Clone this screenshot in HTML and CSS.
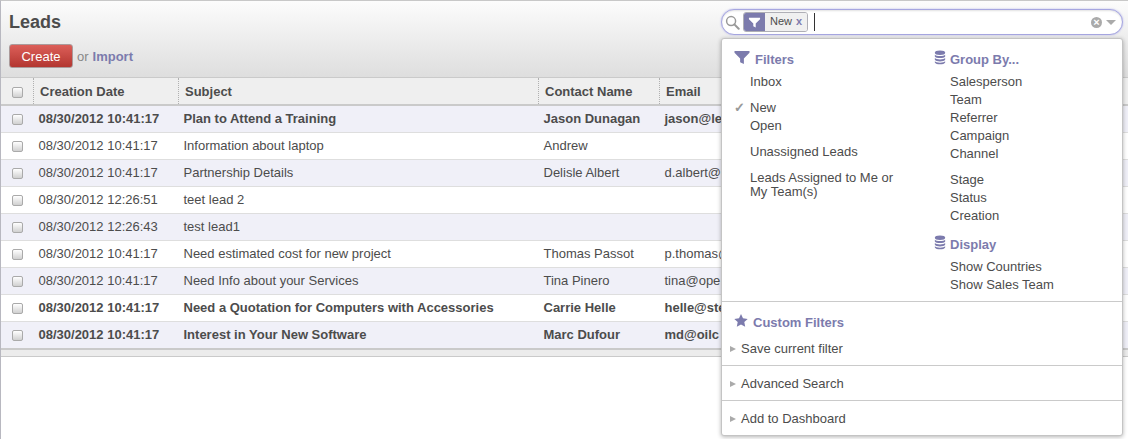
FILE: index.html
```html
<!DOCTYPE html>
<html lang="en">
<head>
    <meta charset="UTF-8">
    <title>Leads</title>
    <link rel="stylesheet" href="styles.css">
</head>
<body>
<div class="app">
    <div class="header">
        <div class="header-left">
            <h2 class="title">Leads</h2>
            <div class="actions">
                <button class="create">Create</button>
                <span class="or">or</span>
                <a class="import">Import</a>
            </div>
        </div>
        <div class="search">
            <svg class="search-icon" viewBox="0 0 16 16"><circle cx="6.5" cy="6.5" r="4.8" fill="none" stroke="#999" stroke-width="1.6"/><path d="M10 10l4.6 4.6" stroke="#999" stroke-width="2.2" stroke-linecap="round"/></svg>
            <div class="facet">
                <span class="facet-cat"><svg class="funnel-white" viewBox="0 0 14 14"><path d="M1 2h12v1.5L8.3 8v4.5l-2.6-1.4V8L1 3.5z" fill="#fff"/></svg></span>
                <span class="facet-val">New <b>x</b></span>
            </div>
            <span class="caret"></span>
            <span class="clear">×</span>
            <span class="drop-arrow"></span>
        </div>
    </div>

    <table class="list">
        <thead>
        <tr>
            <th class="col-check"><span class="check"></span></th>
            <th class="col-date">Creation Date</th>
            <th class="col-subject">Subject</th>
            <th class="col-contact">Contact Name</th>
            <th>Email</th>
        </tr>
        </thead>
        <tbody>
        <tr class="unread"><td><span class="check"></span></td><td>08/30/2012 10:41:17</td><td>Plan to Attend a Training</td><td>Jason Dunagan</td><td>jason@le</td></tr>
        <tr><td><span class="check"></span></td><td>08/30/2012 10:41:17</td><td>Information about laptop</td><td>Andrew</td><td></td></tr>
        <tr><td><span class="check"></span></td><td>08/30/2012 10:41:17</td><td>Partnership Details</td><td>Delisle Albert</td><td>d.albert@</td></tr>
        <tr><td><span class="check"></span></td><td>08/30/2012 12:26:51</td><td>teet lead 2</td><td></td><td></td></tr>
        <tr><td><span class="check"></span></td><td>08/30/2012 12:26:43</td><td>test lead1</td><td></td><td></td></tr>
        <tr><td><span class="check"></span></td><td>08/30/2012 10:41:17</td><td>Need estimated cost for new project</td><td>Thomas Passot</td><td>p.thomas@</td></tr>
        <tr><td><span class="check"></span></td><td>08/30/2012 10:41:17</td><td>Need Info about your Services</td><td>Tina Pinero</td><td>tina@ope</td></tr>
        <tr class="unread"><td><span class="check"></span></td><td>08/30/2012 10:41:17</td><td>Need a Quotation for Computers with Accessories</td><td>Carrie Helle</td><td>helle@ste</td></tr>
        <tr class="unread"><td><span class="check"></span></td><td>08/30/2012 10:41:17</td><td>Interest in Your New Software</td><td>Marc Dufour</td><td>md@oilc</td></tr>
        </tbody>
    </table>
    <div class="list-foot"></div>

    <div class="drawer">
        <div class="drawer-cols">
            <div class="drawer-col">
                <h3><svg class="ico" viewBox="0 0 16 16"><path d="M0 1h16v2l-6 6v6l-4-2V9L0 3z"/></svg>Filters</h3>
                <ul>
                    <li>Inbox</li>
                </ul>
                <ul>
                    <li class="on">New</li>
                    <li>Open</li>
                </ul>
                <ul>
                    <li>Unassigned Leads</li>
                </ul>
                <ul>
                    <li class="wrap">Leads Assigned to Me or<br>My Team(s)</li>
                </ul>
            </div>
            <div class="drawer-col">
                <h3><svg class="ico ico-db" viewBox="0 0 12 16"><ellipse cx="6" cy="3" rx="5.5" ry="2.4"/><path d="M.5 5c1 2 10 2 11 0v2c-1 2.2-10 2.2-11 0zM.5 8.5c1 2 10 2 11 0v2c-1 2.2-10 2.2-11 0zM.5 12c1 2 10 2 11 0v1.2c-1 2.8-10 2.8-11 0z"/></svg>Group By...</h3>
                <ul>
                    <li>Salesperson</li>
                    <li>Team</li>
                    <li>Referrer</li>
                    <li>Campaign</li>
                    <li>Channel</li>
                </ul>
                <ul>
                    <li>Stage</li>
                    <li>Status</li>
                    <li>Creation</li>
                </ul>
                <h3 class="display"><svg class="ico ico-db" viewBox="0 0 12 16"><ellipse cx="6" cy="3" rx="5.5" ry="2.4"/><path d="M.5 5c1 2 10 2 11 0v2c-1 2.2-10 2.2-11 0zM.5 8.5c1 2 10 2 11 0v2c-1 2.2-10 2.2-11 0zM.5 12c1 2 10 2 11 0v1.2c-1 2.8-10 2.8-11 0z"/></svg>Display</h3>
                <ul>
                    <li>Show Countries</li>
                    <li>Show Sales Team</li>
                </ul>
            </div>
        </div>
        <div class="drawer-sec custom">
            <h3><svg class="ico ico-star" viewBox="0 0 14 14"><path d="M7 .5l2 4.3 4.7.6-3.4 3.2.9 4.7L7 11l-4.2 2.3.9-4.7L.3 5.4 5 4.8z"/></svg>Custom Filters</h3>
            <div class="fold">Save current filter</div>
        </div>
        <div class="drawer-sec"><div class="fold">Advanced Search</div></div>
        <div class="drawer-sec"><div class="fold">Add to Dashboard</div></div>
    </div>
</div>
</body>
</html>
```

FILE: styles.css
```css
html, body {
    margin: 0;
    padding: 0;
    background: #fff;
}
body {
    font-family: "Liberation Sans", Arial, sans-serif;
    font-size: 13px;
    color: #4c4c4c;
}
.app {
    position: relative;
    height: 439px;
    overflow: hidden;
    box-sizing: border-box;
    border-left: 1px solid #b8b8c0;
    border-top: 1px solid #c8c8c8;
}
.header {
    display: flex;
    justify-content: space-between;
    height: 76px;
    box-sizing: border-box;
    padding: 8px 5px 0 8px;
    background: linear-gradient(#fcfcfc, #dedede);
}
.title {
    margin: 0;
    font-size: 18px;
    line-height: 26px;
    color: #4c4c4c;
}
.actions {
    display: flex;
    align-items: center;
    margin-top: 9px;
}
.create {
    width: 64px;
    height: 24px;
    padding: 0;
    border: 1px solid #ab9a9a;
    border-radius: 3px;
    background: linear-gradient(#dc5f59, #b33630);
    color: #fff;
    font: 13px "Liberation Sans", Arial, sans-serif;
}
.or {
    margin-left: 4px;
    color: #888;
}
.import {
    margin-left: 4px;
    font-weight: bold;
    color: #7c7bad;
}
.search {
    display: flex;
    align-items: center;
    width: 402px;
    height: 26px;
    box-sizing: border-box;
    padding: 0 6px 0 3px;
    border: 1px solid #a6a6e0;
    border-radius: 13px;
    background: #fff;
    box-shadow: inset 0 1px 2px rgba(0, 0, 0, 0.12), 0 0 2px #b4b4e8;
}
.search-icon {
    width: 15px;
    height: 15px;
}
.facet {
    display: flex;
    height: 20px;
    margin-left: 3px;
    box-sizing: border-box;
    border: 1px solid #afafb6;
    border-radius: 3px;
    overflow: hidden;
    font-size: 11px;
}
.facet-cat {
    display: flex;
    align-items: center;
    justify-content: center;
    width: 21px;
    background: #7c7bad;
}
.funnel-white {
    width: 13px;
    height: 13px;
}
.facet-val {
    padding: 0 5px;
    line-height: 16px;
    background: #f0f0f0;
    color: #4c4c4c;
}
.facet-val b {
    margin-left: 1px;
    font-weight: bold;
    color: #7c7bad;
}
.caret {
    width: 1px;
    height: 18px;
    margin-left: 6px;
    background: #333;
    flex: none;
}
.clear {
    display: block;
    width: 11px;
    height: 11px;
    margin-left: auto;
    border-radius: 50%;
    background: #aaa;
    color: #fff;
    font-size: 11px;
    font-weight: bold;
    line-height: 11px;
    text-align: center;
}
.drop-arrow {
    width: 0;
    height: 0;
    margin-left: 4px;
    border: 5px solid transparent;
    border-top: 5px solid #aaa;
    border-bottom: 0;
}
.list {
    width: 100%;
    table-layout: fixed;
    border-collapse: collapse;
}
.list th {
    height: 26px;
    padding: 0 0 0 6px;
    text-align: left;
    font-weight: bold;
    color: #4c4c4c;
    background: #efefef;
    border-top: 1px solid #cacaca;
    border-bottom: 2px solid #cacaca;
    border-left: 1px dotted #b0b0b0;
}
.list th:first-child, .list td:first-child {
    border-left: 0;
    padding: 0 0 2px;
    text-align: center;
}
.col-check { width: 32px; }
.col-date { width: 138px; }
.col-subject { width: 353px; }
.col-contact { width: 114px; }
.list th:first-child {
    padding: 0;
}
.list td {
    height: 24px;
    padding: 0 0 2px 5px;
    border-bottom: 1px solid #dedede;
    white-space: nowrap;
    overflow: hidden;
}
.list tbody tr:nth-child(odd) {
    background: #f0f0f8;
}
.list tbody tr:last-child td {
    border-bottom: 2px solid #cacaca;
}
.unread td {
    font-weight: bold;
}
.check {
    display: inline-block;
    width: 9px;
    height: 9px;
    vertical-align: middle;
    border: 1px solid #aaa;
    border-radius: 2px;
    background: linear-gradient(#fff, #d0d0d0);
}
.list-foot {
    height: 6px;
    background: #ececec;
    border-bottom: 1px solid #cacaca;
}
.drawer {
    position: absolute;
    left: 720px;
    top: 37px;
    width: 402px;
    height: 398px;
    box-sizing: border-box;
    border: 1px solid #c4c4c4;
    border-radius: 3px;
    background: #fff;
    box-shadow: 0 1px 4px rgba(0, 0, 0, 0.3);
}
.drawer-cols {
    display: flex;
    height: 262px;
    padding-top: 11px;
    box-sizing: border-box;
}
.drawer-col {
    width: 200px;
    padding-left: 12px;
    box-sizing: border-box;
}
.drawer h3 {
    display: flex;
    align-items: center;
    margin: 0 0 5px;
    height: 18px;
    font-size: 13px;
    font-weight: bold;
    color: #7c7bad;
}
.ico {
    width: 16px;
    height: 15px;
    margin: -4px 5px 0 0;
    fill: #7c7bad;
}
.ico-db {
    width: 12px;
    margin-right: 4px;
}
.ico-star {
    width: 14px;
    margin-right: 5px;
}
.drawer ul {
    margin: 0 0 8px;
    padding: 0 0 0 16px;
    list-style: none;
}
.drawer li {
    position: relative;
    line-height: 18px;
}
.drawer li.wrap {
    padding-top: 2px;
    line-height: 14px;
}
.drawer li.on::before {
    content: "✓";
    position: absolute;
    left: -16px;
    color: #999;
    font-size: 13px;
    font-weight: bold;
}
.drawer .display {
    margin-top: 10px;
}
.drawer-sec {
    border-top: 1px solid #cacaca;
    padding: 9px 0 0 8px;
    height: 35px;
    box-sizing: border-box;
}
.drawer-sec.custom {
    height: 64px;
    padding-top: 11px;
}
.custom h3 {
    padding-left: 4px;
    margin-bottom: 9px;
}
.fold {
    position: relative;
    padding-left: 11px;
    line-height: 18px;
}
.fold::before {
    content: "";
    position: absolute;
    left: 0;
    top: 6px;
    border: 3.5px solid transparent;
    border-left: 6px solid #aaa;
    border-right: 0;
}
```
